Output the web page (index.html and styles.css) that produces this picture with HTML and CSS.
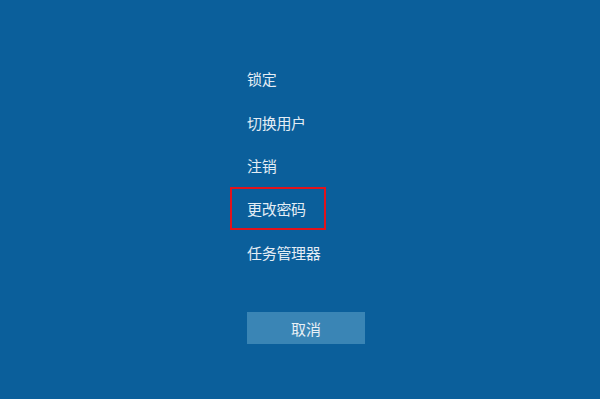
FILE: index.html
```html
<!DOCTYPE html>
<html lang="zh-CN">
<head>
<meta charset="utf-8">
<title>安全选项</title>
<link rel="stylesheet" href="styles.css">
</head>
<body>
<main class="screen">
  <ul class="menu">
    <li class="item">锁定</li>
    <li class="item">切换用户</li>
    <li class="item">注销</li>
    <li class="item item-marked">更改密码</li>
    <li class="item">任务管理器</li>
  </ul>
  <button class="cancel" type="button">取消</button>
</main>
</body>
</html>
```
FILE: styles.css
```css
html, body {
  margin: 0;
  padding: 0;
  height: 100%;
}
body {
  background: #0b5f9b;
  font-family: "Noto Sans CJK SC", "Noto Sans", sans-serif;
  color: #e4edf5;
  overflow: hidden;
}
.screen {
  display: flex;
  flex-direction: column;
  align-items: flex-start;
  padding: 57.3px 0 0 247px;
}
.menu {
  list-style: none;
  margin: 0;
  padding: 0;
  display: flex;
  flex-direction: column;
  align-items: flex-start;
}
.item {
  height: 43.3px;
  display: flex;
  align-items: center;
  font-size: 15px;
  line-height: 1;
  letter-spacing: -0.3px;
  box-sizing: border-box;
}
.item-marked {
  margin-left: -17px;
  padding-left: 15px;
  width: 96px;
  border: 2px solid #e3131c;
}
.cancel {
  margin-top: 38.5px;
  width: 118px;
  height: 32px;
  border: 0;
  background: #3a85b5;
  color: #e8f0f6;
  font-family: "Noto Sans CJK SC", "Noto Sans", sans-serif;
  font-size: 15px;
  padding: 0 0 0 0;
  line-height: 1;
}
```
